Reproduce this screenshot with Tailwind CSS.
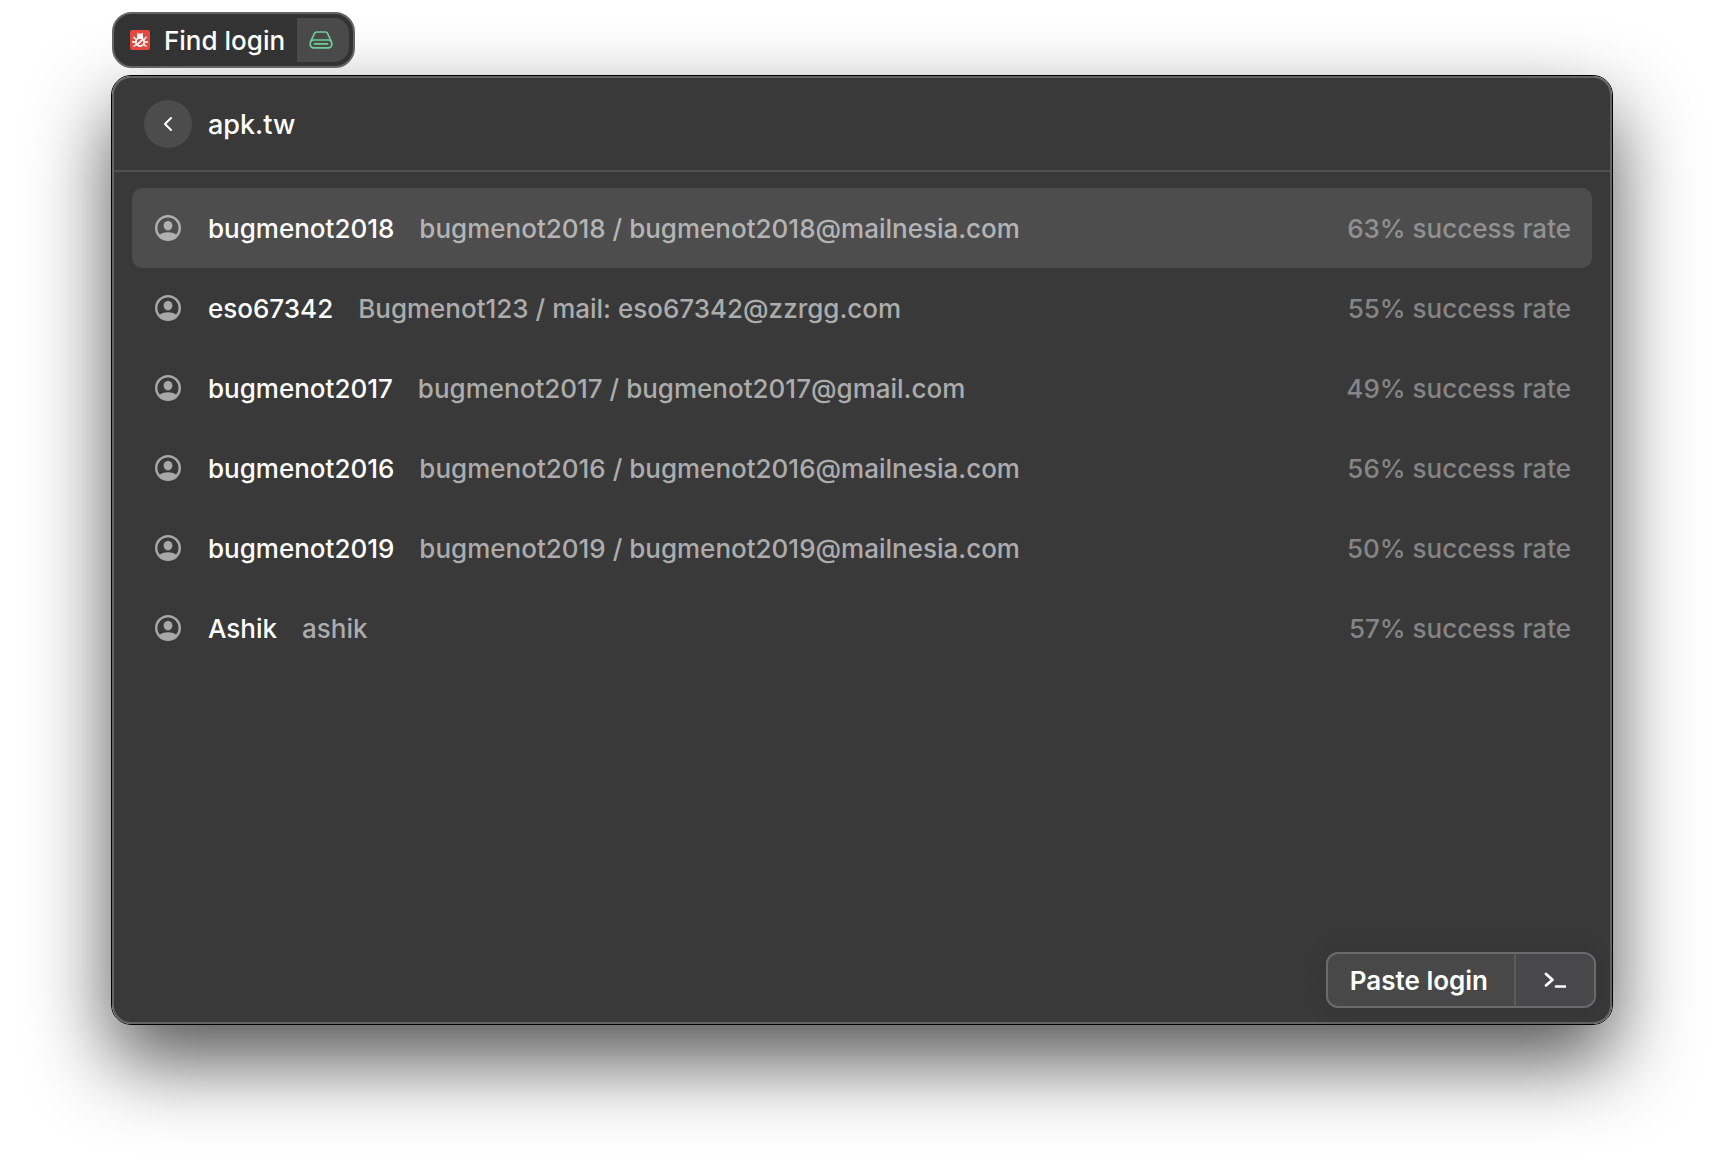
<!DOCTYPE html>
<html lang="en">
<head>
<meta charset="utf-8">
<meta name="viewport" content="width=device-width, initial-scale=1">
<title>Find login</title>
<script src="https://cdn.jsdelivr.net/npm/@tailwindcss/browser@4"></script>
</head>
<body class="flex min-h-screen flex-col items-stretch overflow-hidden bg-white px-[111px] pt-3 pb-[147px] font-['Inter',sans-serif] text-[26px] leading-8 text-white">
  <svg class="hidden" aria-hidden="true">
    <symbol id="user" viewBox="0 0 26 26">
      <circle cx="13" cy="13" r="11.800" fill="none" stroke="currentColor" stroke-width="2.400"/>
      <ellipse cx="13" cy="10.700" rx="4.400" ry="4.800" fill="currentColor"/>
      <path d="M4 20.500C6 18.300 9.300 17.200 13 17.200s7 1.100 9 3.300A12 12 0 0 1 13 25a12 12 0 0 1-9-4.500Z" fill="currentColor"/>
    </symbol>
  </svg>

  <header class="relative z-10 ml-px flex h-14 items-center self-start rounded-[20px] border-2 border-[#646464] bg-[#333] p-1 pl-4">
    <svg class="size-5" viewBox="0 0 20 20" aria-hidden="true">
      <rect width="20" height="20" rx="2" fill="#e04a40"/>
      <g fill="none" stroke="#fff" stroke-width="1.300" stroke-linecap="round">
        <path d="M8.300 4.500 7.600 3.500M11.700 4.500l.700-1M5.800 9.200 3.800 7.200M14.200 9.200l2-2M5 12H2.500M15 12h2.500M6 14.500l-2 1.700M14 14.500l2 1.700"/>
        <circle cx="10" cy="12" r="4.100" stroke-width="1.800"/>
        <path d="m7.300 14.700 5.400-5.400" stroke-width="1.800"/>
      </g>
      <path d="M7 8V6.300A3 2.700 0 0 1 13 6.300V8Z" fill="#fff"/>
    </svg>
    <h1 class="ml-3.5 mr-3 pt-0.5 font-medium">Find login</h1>
    <span class="flex h-11 w-13 items-center justify-center rounded-r-[15px] bg-[#4a4a4a] pr-1 text-[#6fcf97]">
      <svg class="h-[18px] w-6" viewBox="0 0 24 18" fill="none" stroke="currentColor" stroke-width="1.700" stroke-linejoin="round" stroke-linecap="round" aria-hidden="true">
        <path d="m1.700 10.500 3.700-8C5.900 1.500 6.600 1 7.700 1h8.600c1.100 0 1.800.500 2.300 1.500l3.700 8"/>
        <rect x="1.200" y="9" width="21.600" height="7.800" rx="3.500"/>
        <path d="M5.500 12.900h13"/>
      </svg>
    </span>
  </header>

  <main class="mt-[7px] flex flex-1 flex-col rounded-[20px] border border-black shadow-[0_36px_80px_rgba(0,0,0,0.67)]">
    <div class="flex flex-1 flex-col rounded-[19px] border-2 border-[#646464] bg-[#393939]">
      <div class="flex h-[94px] items-center gap-4 border-b-2 border-[#505050] px-[30px]">
        <button type="button" aria-label="Back" class="flex size-12 items-center justify-center rounded-full bg-[#4c4c4c]">
          <svg class="h-4 w-2.5" viewBox="0 0 10 16" fill="none" stroke="currentColor" stroke-width="2" stroke-linecap="round" stroke-linejoin="round" aria-hidden="true"><path d="M8 2 2 8l6 6"/></svg>
        </button>
        <h2 class="pt-0.5 text-[27px] font-medium">apk.tw</h2>
      </div>

      <ul class="flex-1 px-[18px] pt-4 font-medium">
        <li class="flex h-20 items-center rounded-[10px] bg-[#4d4d4d] pr-[21px] pl-[23px]">
          <svg class="mr-[27px] size-[26px] text-[#b0b0b0]" aria-hidden="true"><use href="#user"/></svg>
          <span class="mr-[25px] pt-0.5">bugmenot2018</span><span class="pt-0.5 text-[#b4b4b4]">bugmenot2018 / bugmenot2018@mailnesia.com</span>
          <span class="ml-auto pt-0.5 text-[#919191]">63% success rate</span>
        </li>
        <li class="flex h-20 items-center pr-[21px] pl-[23px]">
          <svg class="mr-[27px] size-[26px] text-[#a8a8a8]" aria-hidden="true"><use href="#user"/></svg>
          <span class="mr-[25px] pt-0.5">eso67342</span><span class="pt-0.5 text-[#acacac]">Bugmenot123 / mail: eso67342@zzrgg.com</span>
          <span class="ml-auto pt-0.5 text-[#858585]">55% success rate</span>
        </li>
        <li class="flex h-20 items-center pr-[21px] pl-[23px]">
          <svg class="mr-[27px] size-[26px] text-[#a8a8a8]" aria-hidden="true"><use href="#user"/></svg>
          <span class="mr-[25px] pt-0.5">bugmenot2017</span><span class="pt-0.5 text-[#acacac]">bugmenot2017 / bugmenot2017@gmail.com</span>
          <span class="ml-auto pt-0.5 text-[#858585]">49% success rate</span>
        </li>
        <li class="flex h-20 items-center pr-[21px] pl-[23px]">
          <svg class="mr-[27px] size-[26px] text-[#a8a8a8]" aria-hidden="true"><use href="#user"/></svg>
          <span class="mr-[25px] pt-0.5">bugmenot2016</span><span class="pt-0.5 text-[#acacac]">bugmenot2016 / bugmenot2016@mailnesia.com</span>
          <span class="ml-auto pt-0.5 text-[#858585]">56% success rate</span>
        </li>
        <li class="flex h-20 items-center pr-[21px] pl-[23px]">
          <svg class="mr-[27px] size-[26px] text-[#a8a8a8]" aria-hidden="true"><use href="#user"/></svg>
          <span class="mr-[25px] pt-0.5">bugmenot2019</span><span class="pt-0.5 text-[#acacac]">bugmenot2019 / bugmenot2019@mailnesia.com</span>
          <span class="ml-auto pt-0.5 text-[#858585]">50% success rate</span>
        </li>
        <li class="flex h-20 items-center pr-[21px] pl-[23px]">
          <svg class="mr-[27px] size-[26px] text-[#a8a8a8]" aria-hidden="true"><use href="#user"/></svg>
          <span class="mr-[25px] pt-0.5">Ashik</span><span class="pt-0.5 text-[#acacac]">ashik</span>
          <span class="ml-auto pt-0.5 text-[#858585]">57% success rate</span>
        </li>
      </ul>

      <div class="flex justify-end px-3.5 pb-3.5">
        <div class="flex h-14 overflow-hidden rounded-xl border-2 border-[#6b6b6b] bg-[#484848] shadow-[0_0_24px_rgba(0,0,0,0.12)]">
          <button type="button" class="border-r-2 border-[#5c5c5c] pt-0.5 pr-[26px] pl-[22px] font-semibold">Paste login</button>
          <button type="button" aria-label="More actions" class="flex w-[78px] items-center justify-center bg-[#48484a]">
            <svg class="h-4 w-[22px]" viewBox="0 0 22 16" fill="none" stroke="currentColor" stroke-width="2.700" stroke-linecap="round" stroke-linejoin="round" aria-hidden="true"><path d="m2 2 6.500 5.700L2 13.400M12 14.500h9"/></svg>
          </button>
        </div>
      </div>
    </div>
  </main>
</body>
</html>
